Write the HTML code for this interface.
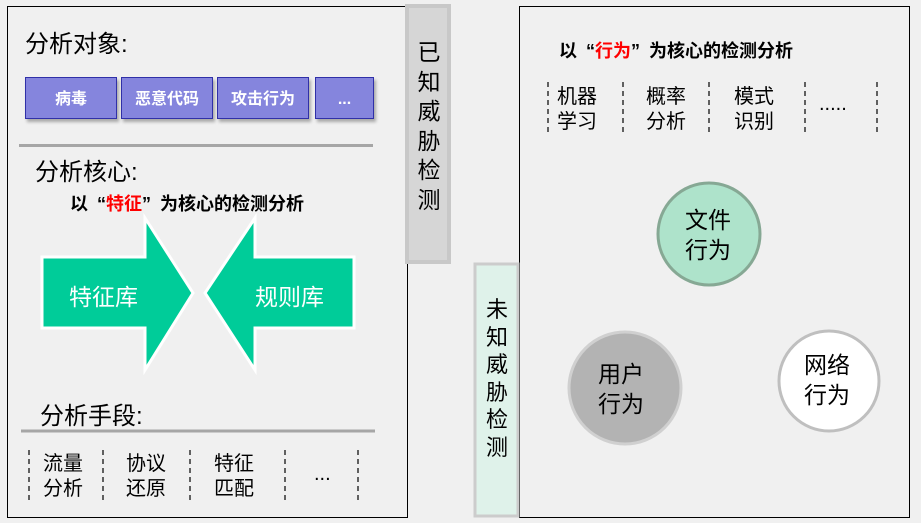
<!DOCTYPE html>
<html><head><meta charset="utf-8"><style>
body{margin:0;width:921px;height:523px;background:#f0f0f0;position:relative;overflow:hidden;font-family:"Liberation Sans","Noto Sans CJK SC",sans-serif;color:#000}
.a{position:absolute;white-space:nowrap}
.ql{padding-left:9px}
.qr{padding-right:9px}
.btn{position:absolute;top:77px;height:40px;background:#8585dd;border:1px solid #3030a8;box-shadow:2px 3px 3px rgba(0,0,0,.3);color:#fff;font-weight:bold;font-size:16px;line-height:44px;text-align:center}
.h{font-size:24px}
.t{font-size:20px;line-height:25px}
.v{position:absolute;font-size:22px;line-height:29.5px;text-align:center;width:30px}
</style></head><body>
<svg width="921" height="523" style="position:absolute;left:0;top:0">
<rect x="7.5" y="6.5" width="400" height="511" fill="#f0f0f0" stroke="#000" stroke-width="1"/>
<rect x="519.5" y="6.5" width="390" height="511" fill="#f0f0f0" stroke="#000" stroke-width="1"/>
<rect x="407" y="6" width="42" height="256" fill="#d6d6d6" stroke="#c8c8c8" stroke-width="4"/>
<rect x="475" y="264" width="43" height="252" fill="#dff2ea" stroke="#cccccc" stroke-width="3"/>
<line x1="19" y1="145.5" x2="373" y2="145.5" stroke="#a6a6a6" stroke-width="3"/>
<line x1="21" y1="431" x2="375" y2="431" stroke="#a6a6a6" stroke-width="3"/>
<polygon points="42,257 145,257 145,218 193,293 145,370 145,328 42,328" fill="#00cc99" stroke="#fff" stroke-width="3"/>
<polygon points="354,257 255,257 255,218 205,293 255,370 255,328 354,328" fill="#00cc99" stroke="#fff" stroke-width="3"/>
<g stroke="#000" stroke-width="1.2" stroke-dasharray="5,4">
<line x1="29" y1="450" x2="29" y2="503"/><line x1="103" y1="450" x2="103" y2="503"/><line x1="190" y1="450" x2="190" y2="503"/><line x1="285" y1="450" x2="285" y2="503"/><line x1="358" y1="450" x2="358" y2="503"/>
<line x1="548" y1="82" x2="548" y2="135"/><line x1="623" y1="82" x2="623" y2="135"/><line x1="709" y1="82" x2="709" y2="135"/><line x1="805" y1="82" x2="805" y2="135"/><line x1="877" y1="82" x2="877" y2="135"/>
</g>
<circle cx="709" cy="234" r="51" fill="#aee3cb" stroke="#86a894" stroke-width="3"/>
<circle cx="625" cy="388" r="56" fill="#b3b3b3" stroke="#d0d0d0" stroke-width="3"/>
<circle cx="829" cy="381" r="50" fill="#fff" stroke="#bfbfbf" stroke-width="3"/>
</svg>
<div class="a h" style="left:25px;top:24px">分析对象:</div>
<div class="btn" style="left:25px;width:90px">病毒</div>
<div class="btn" style="left:121px;width:90px">恶意代码</div>
<div class="btn" style="left:217px;width:90px">攻击行为</div>
<div class="btn" style="left:315px;width:57px">...</div>
<div class="a h" style="left:35px;top:152px">分析核心:</div>
<div class="a" style="left:70px;top:190px;font-size:18px;font-weight:bold">以<span class="ql">“</span><span style="color:#f00">特征</span><span class="qr">”</span>为核心的检测分析</div>
<div class="a" style="left:69px;top:278px;font-size:23px;color:#fff">特征库</div>
<div class="a" style="left:255px;top:278px;font-size:23px;color:#fff">规则库</div>
<div class="a h" style="left:40px;top:396px">分析手段:</div>
<div class="a t" style="left:43px;top:452px">流量<br>分析</div>
<div class="a t" style="left:126px;top:452px">协议<br>还原</div>
<div class="a t" style="left:214px;top:452px">特征<br>匹配</div>
<div class="a t" style="left:314px;top:462px">...</div>
<div class="v" style="left:414px;top:38px;font-size:23px">已<br>知<br>威<br>胁<br>检<br>测</div>
<div class="v" style="left:482px;top:296px;font-size:22px;line-height:27.5px">未<br>知<br>威<br>胁<br>检<br>测</div>
<div class="a" style="left:559px;top:37px;font-size:18px;font-weight:bold">以<span class="ql">“</span><span style="color:#f00">行为</span><span class="qr">”</span>为核心的检测分析</div>
<div class="a t" style="left:557px;top:85px">机器<br>学习</div>
<div class="a t" style="left:646px;top:85px">概率<br>分析</div>
<div class="a t" style="left:734px;top:85px">模式<br>识别</div>
<div class="a t" style="left:819px;top:92px">.....</div>
<div class="a" style="left:685px;top:205px;font-size:23px;line-height:30px">文件<br>行为</div>
<div class="a" style="left:598px;top:359px;font-size:23px;line-height:30px">用户<br>行为</div>
<div class="a" style="left:804px;top:350px;font-size:23px;line-height:30px">网络<br>行为</div>
</body></html>
